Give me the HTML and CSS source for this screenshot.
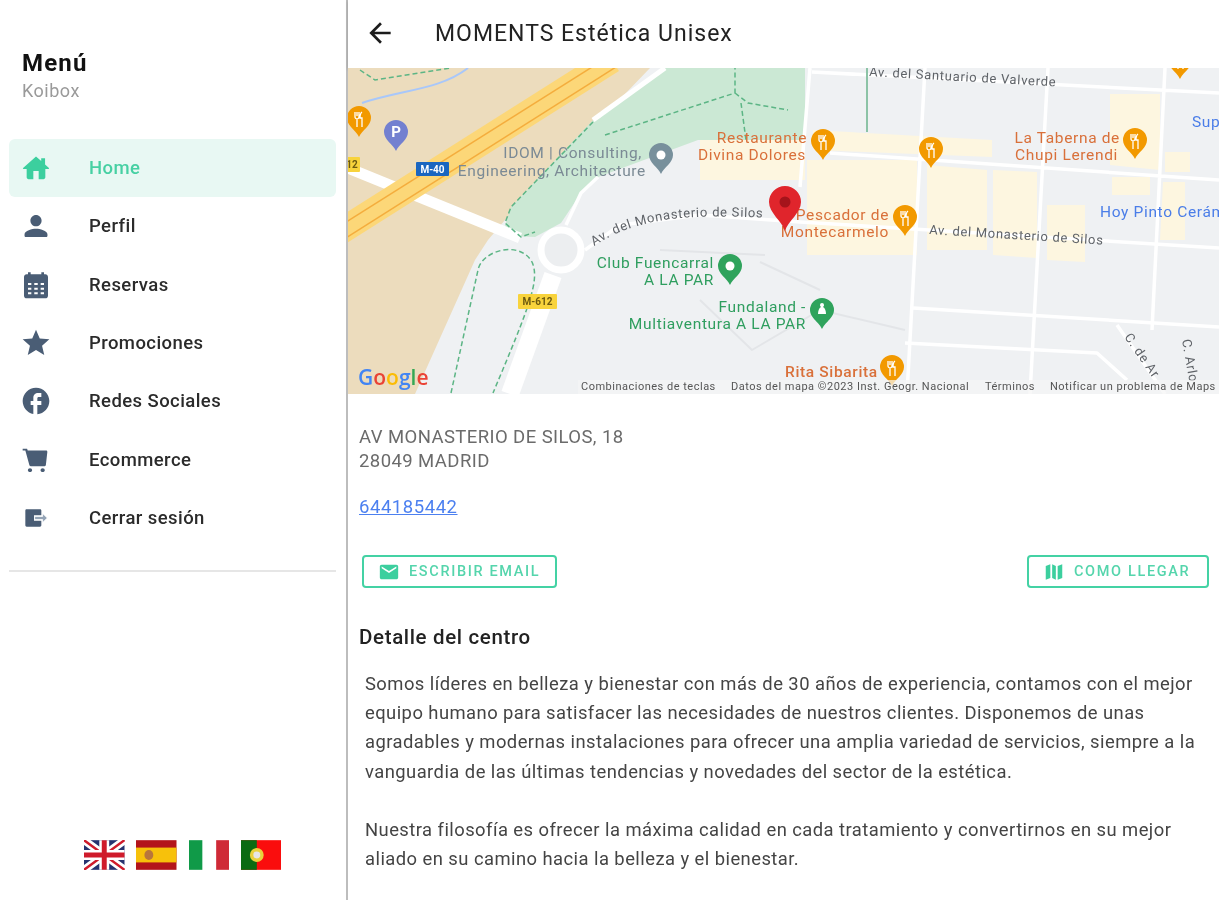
FILE: index.html
```html
<!DOCTYPE html>
<html lang="es">
<head>
<meta charset="utf-8">
<title>MOMENTS Estética Unisex</title>
<link rel="stylesheet" href="styles.css">
</head>
<body>
<div class="app">
  <aside class="sidebar">
    <div class="menu-head">
      <div class="menu-title">Menú</div>
      <div class="menu-sub">Koibox</div>
    </div>
    <nav class="nav">
      <a class="nav-item active"><svg class="nav-icon" viewBox="0 0 24 24"><path d="M18.800 9.400V4.600h-2.900v2.200L12 3.300 2.300 12c-.3.300-.1.700.3.700H5v6.300c0 .8.600 1.400 1.400 1.400H10v-6.200h4v6.200h3.600c.8 0 1.400-.6 1.400-1.400v-6.300h2.400c.4 0 .6-.4.300-.7z"/></svg><span>Home</span></a>
      <a class="nav-item"><svg class="nav-icon" viewBox="0 0 24 24"><path d="M12 12.200c2.300 0 4.200-1.900 4.200-4.200S14.300 3.800 12 3.800 7.800 5.700 7.800 8s1.900 4.200 4.200 4.200zm0 1.900c-2.900 0-8.600 1.400-8.600 4.200v1c0 .6.400 1 1 1h15.200c.6 0 1-.4 1-1v-1c0-2.800-5.700-4.200-8.600-4.200z"/></svg><span>Perfil</span></a>
      <a class="nav-item"><svg class="nav-icon" viewBox="0 0 24 24"><path fill-rule="evenodd" d="M19 4h-1V2.500h-2V4H8V2.500H6V4H5C3.900 4 3 4.900 3 6v14c0 1.100.9 2 2 2h14c1.100 0 2-.9 2-2V6c0-1.100-.9-2-2-2zM6 10.500h2.500V12H6zm4.700 0h2.600V12h-2.600zm4.800 0H18V12h-2.500zM6 14h2.500v1.500H6zm4.700 0h2.600v1.500h-2.600zm4.800 0H18v1.500h-2.500zM6 17.500h2.500V19H6zm4.700 0h2.600V19h-2.600zm4.800 0H18V19h-2.500z"/></svg><span>Reservas</span></a>
      <a class="nav-item"><svg class="nav-icon" viewBox="0 0 24 24"><path d="M12 17.270L18.180 21l-1.640-7.030L22 9.240l-7.190-.61L12 2 9.190 8.630 2 9.240l5.460 4.730L5.820 21z"/></svg><span>Promociones</span></a>
      <a class="nav-item"><svg class="nav-icon" viewBox="0 0 24 24"><path d="M22 12c0-5.520-4.480-10-10-10S2 6.480 2 12c0 4.840 3.440 8.870 8 9.800V15H8v-3h2V9.500C10 7.570 11.570 6 13.500 6H16v3h-2c-.55 0-1 .45-1 1v2h3v3h-3v6.950c5.050-.5 9-4.760 9-9.950z"/></svg><span>Redes Sociales</span></a>
      <a class="nav-item"><svg class="nav-icon" viewBox="0 0 24 24"><path d="M7.500 18.200c-.9 0-1.600.6-1.600 1.400s.7 1.400 1.600 1.400 1.600-.6 1.600-1.400-.7-1.400-1.600-1.400zM2 3.500v1.300h2l3 11c.1.5.5.9 1 .9h10.500c.5 0 .8-.4.9-.9L20.500 6c.1-.6-.3-1.100-.9-1.100H5.800l-.5-1.400zm15 14.700c-.9 0-1.600.6-1.600 1.400s.7 1.400 1.600 1.400 1.600-.6 1.600-1.400-.7-1.400-1.600-1.400z"/></svg><span>Ecommerce</span></a>
      <a class="nav-item"><svg class="nav-icon" viewBox="0 0 24 24"><path d="M5 5.500h10c.6 0 1 .4 1 1v3.500H10.500v4H16v3.500c0 .6-.4 1-1 1H5c-.6 0-1-.4-1-1v-11c0-.6.4-1 1-1z"/><path class="logout-arrow" d="M11 10.800h6V8.600l3.500 3.400-3.500 3.400v-2.200h-6z"/></svg><span>Cerrar sesión</span></a>
    </nav>
    <hr class="divider">
    <div class="flags">
      <svg class="flag" viewBox="0 0 41 30"><rect width="41" height="30" fill="#27336f"/><path d="M0 0L41 30M41 0L0 30" stroke="#fff" stroke-width="8"/><path d="M0 0L41 30M41 0L0 30" stroke="#cf1b2b" stroke-width="2.500"/><path d="M20.500 0V30M0 15H41" stroke="#fff" stroke-width="10"/><path d="M20.500 0V30M0 15H41" stroke="#cf1b2b" stroke-width="5"/></svg>
      <svg class="flag" viewBox="0 0 41 30"><rect width="41" height="30" fill="#b3151b"/><rect y="7.500" width="41" height="15" fill="#f7c10b"/><ellipse cx="13" cy="15" rx="4.500" ry="5" fill="#b8763c"/></svg>
      <svg class="flag" viewBox="0 0 41 30"><rect width="13.500" height="30" fill="#109a48"/><rect x="27.500" width="13.500" height="30" fill="#cf2a37"/></svg>
      <svg class="flag" viewBox="0 0 41 30"><rect width="41" height="30" fill="#fa0d0d"/><rect width="16" height="30" fill="#0b6b12"/><circle cx="16" cy="15" r="7" fill="#e9d13c"/><circle cx="16" cy="15" r="3.500" fill="#e6e6e6"/></svg>
    </div>
  </aside>

  <main class="main">
    <header class="topbar">
      <svg class="back" viewBox="0 0 24 24"><path d="M20 11H7.830l5.590-5.590L12 4l-8 8 8 8 1.410-1.410L7.830 13H20v-2z"/></svg>
      <h1 class="title">MOMENTS Estética Unisex</h1>
    </header>

    <svg class="map" viewBox="348 68 871 326">
      <defs>
        <path id="drop" d="M0 19C-3 12-12 8-12 0A12 12 0 1 1 12 0C12 8 3 12 0 19Z"/>
        <g id="fork"><use href="#drop" fill="#f29900"/><path d="M-4-6v5c0 1 1 2 2 2v8M-2-6v4M0-6v5c0 1-1 2-2 2M3-6c-1.500 1-2 4-2 6h2v9" fill="none" stroke="#fff" stroke-width="1.300"/></g>
      </defs>
      <rect x="348" y="68" width="871" height="326" fill="#eff1f3"/>
      <path d="M348 68H650L600 120 505 220 488 240 475 260 415 394H348Z" fill="#ecdcbd"/>
      <path d="M665 68H805V140H698L598 177 581 193 561 223 535 237 511 236 505 226 511 207 593 120Z" fill="#cbe8d4"/>

      <g fill="#fdf6e0">
        <path d="M700 140H805V180H700Z"/>
        <path d="M813 130L992 140V157L813 150Z"/>
        <path d="M807 160H917V255H807Z"/>
        <path d="M927 165L987 170V250H927Z"/>
        <path d="M993 170L1037 172V258L993 255Z"/>
        <path d="M1047 205H1085V262L1047 260Z"/>
        <path d="M1110 94H1160V170L1110 165Z"/>
        <path d="M1165 152H1190V172H1165Z"/>
        <path d="M1112 177H1150V195H1112Z"/>
        <path d="M1163 182H1185V240H1160Z"/>
      </g>

      <g fill="none" stroke="#fff" stroke-linejoin="round">
        <path stroke-width="5" d="M665 68L593 120"/>
        <path stroke-width="3.500" d="M598 177L581 193 566 225"/>
        <path stroke-width="3.500" d="M810 68L800 187M925 68L907 394M1048 68L1030 394M1165 68L1152 330M830 153L1219 180M812 72L1219 93"/>
        <path stroke-width="3.500" d="M585 250L620 225 700 215 800 222 1219 248"/>
        <path stroke-width="3.500" d="M913 308L1219 327M905 343L1097 353 1127 380M1117 325L1165 394"/>
        <path stroke-width="2" stroke="#e3e5e8" d="M765 255L660 250M700 300L752 350 820 310 905 330M760 262L820 290"/>
        <path stroke-width="11" d="M348 168L520 238"/>
        <path stroke-width="18" d="M553 275L510 394"/>
        <circle cx="561" cy="250" r="20" stroke-width="7" fill="#eceef0"/>
      </g>

      <path d="M340 232L612 60" fill="none" stroke="#fcd778" stroke-width="26"/>
      <path d="M335 229L608 57" fill="none" stroke="#f4ad3d" stroke-width="1.500"/>
      <path d="M341 241L616 67" fill="none" stroke="#f4ad3d" stroke-width="1.500"/>

      <g fill="none" stroke="#5cb585" stroke-width="1.500" stroke-dasharray="5 3">
        <path d="M360 70L375 80 451 68"/>
        <path d="M593 122L511 207 505 223 521 237 535 232"/>
        <path d="M605 135L735 93V68M735 93L748 103 788 110M741 103L746 140"/>
        <path d="M451 393L478 270C482 250 520 240 532 262 540 280 530 305 493 393"/>
      </g>
      <path d="M362 103C400 90 440 90 468 68" fill="none" stroke="#a8c7fa" stroke-width="2"/>
      <path d="M867 68V132" fill="none" stroke="#8cc3a6" stroke-width="2"/>

      <g class="shield">
        <rect x="416" y="162" width="33" height="14" rx="1" fill="#1a66c0"/>
        <text class="shield-text blue" x="432.500" y="172.500">M-40</text>
        <rect x="518" y="294" width="39" height="15" rx="1" fill="#f8d33c"/>
        <text class="shield-text" x="537.500" y="305">M-612</text>
        <rect x="340" y="157" width="20" height="15" rx="1" fill="#f8d33c"/>
        <text class="shield-text" x="352" y="168">12</text>
      </g>

      <text class="lbl road" transform="translate(869 76) rotate(3.200)">Av. del Santuario de Valverde</text>
      <text class="lbl road" transform="translate(929 234) rotate(3.500)">Av. del Monasterio de Silos</text>
      <path id="silos" d="M594 246C640 216 690 214 770 218" fill="none"/>
      <text class="lbl road"><textPath href="#silos">Av. del Monasterio de Silos</textPath></text>
      <text class="lbl road" transform="translate(1124 337) rotate(55)">C. de Ar</text>
      <text class="lbl road" transform="translate(1182 340) rotate(80)">C. Arlo</text>

      <text class="lbl grey" x="642" y="158" text-anchor="end">IDOM | Consulting,</text>
      <text class="lbl grey" x="646" y="176" text-anchor="end">Engineering, Architecture</text>
      <text class="lbl orange" x="807" y="143" text-anchor="end">Restaurante</text>
      <text class="lbl orange" x="806" y="160" text-anchor="end">Divina Dolores</text>
      <text class="lbl orange" x="1120" y="143" text-anchor="end">La Taberna de</text>
      <text class="lbl orange" x="1118" y="160" text-anchor="end">Chupi Lerendi</text>
      <text class="lbl orange" x="889" y="220" text-anchor="end">Pescador de</text>
      <text class="lbl orange" x="889" y="237" text-anchor="end">Montecarmelo</text>
      <text class="lbl orange strong" x="785" y="377">Rita Sibarita</text>
      <text class="lbl green" x="714" y="268" text-anchor="end">Club Fuencarral</text>
      <text class="lbl green" x="714" y="285" text-anchor="end">A LA PAR</text>
      <text class="lbl green" x="806" y="312" text-anchor="end">Fundaland -</text>
      <text class="lbl green" x="806" y="329" text-anchor="end">Multiaventura A LA PAR</text>
      <text class="lbl blue-lbl" x="1100" y="217">Hoy Pinto Cerámica</text>
      <text class="lbl blue-lbl" x="1192" y="127">Supermercado</text>

      <use href="#fork" x="359" y="118"/>
      <use href="#fork" x="823" y="141"/>
      <use href="#fork" x="931" y="149"/>
      <use href="#fork" x="1135" y="140"/>
      <use href="#fork" x="905" y="217"/>
      <use href="#fork" x="892" y="367"/>
      <use href="#fork" x="1180" y="60"/>
      <g transform="translate(396 132)"><use href="#drop" fill="#7380d0"/><text class="pin-p" y="5">P</text></g>
      <g transform="translate(661 155)"><use href="#drop" fill="#78909c"/><circle r="4.500" fill="#fff"/></g>
      <g transform="translate(730 266)"><use href="#drop" fill="#2fa35c"/><circle r="4.500" fill="#fff"/></g>
      <g transform="translate(822 310)"><use href="#drop" fill="#2fa35c"/><path d="M0-7a2 2 0 0 1 2 2c0 1-.5 1.500-1 2 2 1 3 4 3 7H-4c0-3 1-6 3-7-.5-.5-1-1-1-2a2 2 0 0 1 2-2z" fill="#fff"/></g>
      <g transform="translate(785 202)"><path d="M0 29C-3 19-16 11-16 0A16 16 0 1 1 16 0C16 11 3 19 0 29Z" fill="#e0252c"/><circle r="5.500" fill="#a5141b"/></g>

      <rect x="578" y="380" width="641" height="14" fill="#f5f5f5" opacity=".7"/>
      <text class="attr" x="581" y="390">Combinaciones de teclas</text>
      <text class="attr" x="731" y="390">Datos del mapa ©2023 Inst. Geogr. Nacional</text>
      <text class="attr" x="985" y="390">Términos</text>
      <text class="attr" x="1050" y="390">Notificar un problema de Maps</text>
      <text class="google" x="358" y="385"><tspan fill="#4285f4">G</tspan><tspan fill="#ea4335">o</tspan><tspan fill="#fbbc05">o</tspan><tspan fill="#4285f4">g</tspan><tspan fill="#34a853">l</tspan><tspan fill="#ea4335">e</tspan></text>
    </svg>

    <section class="details">
      <p class="address">AV MONASTERIO DE SILOS, 18<br>28049 MADRID</p>
      <a class="phone">644185442</a>
      <div class="actions">
        <a class="btn btn-email"><svg class="btn-icon" viewBox="0 0 24 24"><path d="M20 4H4c-1.100 0-2 .9-2 2v12c0 1.100.9 2 2 2h16c1.100 0 2-.9 2-2V6c0-1.100-.9-2-2-2zm0 4l-8 5-8-5V6l8 5 8-5v2z"/></svg>ESCRIBIR EMAIL</a>
        <a class="btn btn-map"><svg class="btn-icon" viewBox="0 0 24 24"><path d="M3 5.500L8 3.500v15L3 20.500zM10 3.500l4 2v15l-4-2zM16 5.500l5-2v15l-5 2z"/></svg>COMO LLEGAR</a>
      </div>
      <h2 class="detail-title">Detalle del centro</h2>
      <p class="detail-text">Somos líderes en belleza y bienestar con más de 30 años de experiencia, contamos con el mejor<br>equipo humano para satisfacer las necesidades de nuestros clientes. Disponemos de unas<br>agradables y modernas instalaciones para ofrecer una amplia variedad de servicios, siempre a la<br>vanguardia de las últimas tendencias y novedades del sector de la estética.<br><br>Nuestra filosofía es ofrecer la máxima calidad en cada tratamiento y convertirnos en su mejor<br>aliado en su camino hacia la belleza y el bienestar.</p>
    </section>
  </main>
</div>
</body>
</html>
```
FILE: styles.css
```css
* { box-sizing: border-box; }
html, body { margin: 0; height: 100%; }
body { font-family: Roboto, "Noto Sans", sans-serif; background: #fff; overflow: hidden; }

.app { display: flex; height: 900px; filter: blur(.4px); }

.sidebar {
  width: 348px;
  flex: none;
  border-right: 2px solid #bdbdbd;
  display: flex;
  flex-direction: column;
  padding: 0 10px 0 9px;
}
.menu-head { padding: 49px 0 0 13px; height: 139px; }
.menu-title { font-size: 24px; line-height: 28px; font-weight: 700; color: #111; letter-spacing: 1.200px; }
.menu-sub { font-size: 18px; line-height: 28px; color: #9a9a9a; letter-spacing: .5px; }

.nav { display: flex; flex-direction: column; }
.nav-item {
  display: flex;
  align-items: center;
  height: 58.300px;
  padding-left: 11px;
  gap: 37px;
  border-radius: 6px;
  font-size: 18.500px;
  font-weight: 500;
  letter-spacing: .42px;
  color: #2b2b2b;
}
.nav-icon { width: 32px; height: 32px; fill: #4a5d75; flex: none; }
.logout-arrow { fill: #93a3b5; stroke: #fff; stroke-width: .6; }
.nav-item.active { background: #e8f8f3; color: #47d0a3; }
.active .nav-icon { fill: #3ccf9e; }

.divider { border: 0; height: 2px; background: #e6e6e6; margin: 23px 0 0; width: 327px; }

.flags { margin-top: auto; margin-bottom: 30px; padding-left: 75px; display: flex; gap: 11.800px; }
.flag { width: 40.500px; height: 30px; }

.main { flex: 1; min-width: 0; }
.topbar { height: 68px; display: flex; align-items: center; padding: 0 0 2px 16px; gap: 39px; box-shadow: 0 1px 3px rgba(0,0,0,.2); position: relative; }
.back { width: 32px; height: 32px; fill: #1c1c1c; flex: none; }
.title { margin: 0; font-size: 23px; font-weight: 400; letter-spacing: 1px; color: #222; }

.map { display: block; width: 871px; height: 326px; filter: blur(.4px); }
.lbl { font-family: Roboto, sans-serif; font-size: 15.500px; letter-spacing: .65px; }
.road { font-size: 13px; fill: #5f6368; letter-spacing: .7px; }
.grey { fill: #7b8a95; }
.orange { fill: #d9703a; }
.strong { font-weight: 500; }
.green { fill: #2f9e5f; }
.blue-lbl { fill: #4a7de8; }
.shield-text { font-size: 10px; font-weight: 700; text-anchor: middle; fill: #6d5a10; }
.shield-text.blue { fill: #fff; }
.pin-p { font-size: 15px; font-weight: 700; fill: #fff; text-anchor: middle; }
.attr { font-size: 11px; letter-spacing: .5px; fill: #555; }
.google { font-size: 21px; font-family: "Open Sans", sans-serif; font-weight: 600; }

.details { padding: 31px 10px 0 11px; }
.address { margin: 0; font-size: 18.500px; line-height: 24px; color: #6b6b6b; letter-spacing: .42px; }
.phone { display: block; margin-top: 22px; font-size: 18.500px; line-height: 24px; color: #4c80f0; text-decoration: underline; letter-spacing: .55px; }
.actions { display: flex; justify-content: space-between; margin: 36px 0 0 3px; }
.btn { height: 33px; border: 2px solid #44d2a4; border-radius: 4px; display: flex; align-items: center; gap: 9px; padding-left: 14px; color: #55d5ac; font-size: 14.500px; font-weight: 500; letter-spacing: 1.650px; }
.btn-email { width: 195px; }
.btn-map { width: 182px; }
.btn-icon { width: 22px; height: 22px; fill: #3ccf9e; flex: none; }
.detail-title { margin: 37px 0 0; font-size: 20.500px; line-height: 24px; font-weight: 500; color: #222; letter-spacing: .65px; }
.detail-text { margin: 20px 0 0 6px; font-size: 18.400px; line-height: 29.200px; color: #444; letter-spacing: .45px; white-space: nowrap; }
```
